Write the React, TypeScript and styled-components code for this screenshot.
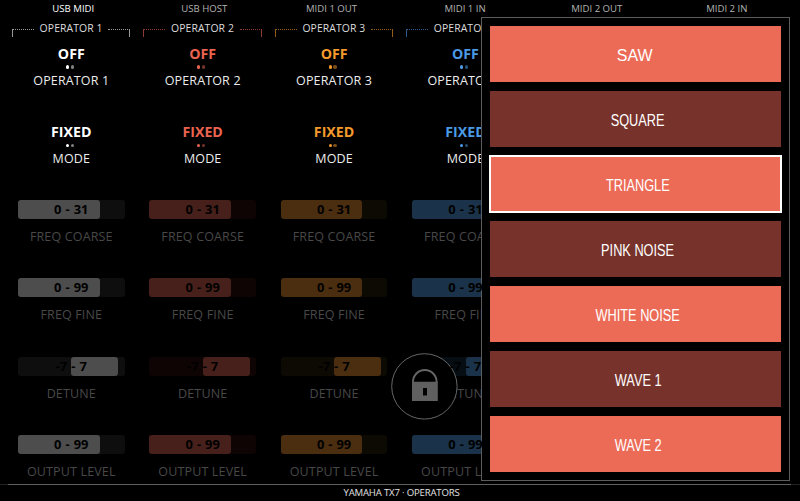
import React from "react";
import styled, { createGlobalStyle } from "styled-components";

const Global = createGlobalStyle`
  * { box-sizing: border-box; }
  body { margin: 0; background: #000; overflow: hidden; }
`;

const Screen = styled.main`
  position: relative;
  width: 800px;
  height: 501px;
  display: grid;
  grid-template-rows: 20px 464px 17px;
  background: #000;
  color: #ececec;
  font-family: "Open Sans", sans-serif;
  overflow: hidden;
`;

const Tabs = styled.nav`
  display: grid;
  grid-template-columns: 131px 131px 123.5px 143.5px 120px 140px;
  padding-left: 7.8px;
`;

const Tab = styled.div<{ $active?: boolean }>`
  text-align: center;
  font-size: 9.6px;
  line-height: 17px;
  color: ${(p) => (p.$active ? "#fff" : "#b2b2b2")};
`;

const Operators = styled.section`
  display: grid;
  grid-template-columns: repeat(4, 131.4px);
  padding-left: 5.6px;
`;

const Column = styled.div`
  display: grid;
  grid-template-rows: 17.2px repeat(6, 78.2px);
  min-width: 0;
`;

const Header = styled.header<{ $color: string }>`
  display: flex;
  align-items: flex-start;
  justify-content: space-between;
  width: 118.6px;
  margin-left: 6.2px;
  font-size: 10.4px;
  line-height: 17px;
  letter-spacing: 0.1px;
  white-space: nowrap;
  color: #dcdcdc;

  &::before,
  &::after {
    content: "";
    width: 21px;
    height: 7px;
    margin-top: 9px;
    border: 0 solid ${(p) => p.$color};
    border-top: 1px dotted ${(p) => p.$color};
    opacity: 0.6;
  }
  &::before { border-left-width: 1px; }
  &::after { border-right-width: 1px; }
`;

const Cell = styled.div`
  display: flex;
  flex-direction: column;
  align-items: center;
`;

const Value = styled.div<{ $color: string }>`
  margin-top: 6.7px;
  height: 20px;
  font: 700 14.2px/20px "Open Sans", sans-serif;
  color: ${(p) => p.$color};
`;

const Dots = styled.div<{ $color: string }>`
  display: flex;
  gap: 1.6px;
  width: 8px;
  height: 3px;
  margin: 1.5px 3px 0 0;

  &::before,
  &::after {
    content: "";
    width: 3.4px;
    height: 3.4px;
    border-radius: 50%;
    background: ${(p) => p.$color};
  }
  &::after { opacity: 0.5; }
`;

const Label = styled.div<{ $dim?: boolean }>`
  margin-top: ${(p) => (p.$dim ? "9.1px" : "3.3px")};
  font-size: 12.5px;
  line-height: 18px;
  letter-spacing: 0.15px;
  white-space: nowrap;
  color: ${(p) => (p.$dim ? "#484848" : "#ececec")};
`;

const Bar = styled.div<{ $fill: string; $track: string; $bipolar?: boolean }>`
  flex: none;
  width: 106.5px;
  height: 19px;
  margin-top: 6.6px;
  border-radius: 3px;
  background: ${(p) => p.$track};
  display: grid;

  &::before {
    content: "";
    grid-area: 1 / 1;
    width: ${(p) => (p.$bipolar ? "47px" : "81.5px")};
    margin-left: ${(p) => (p.$bipolar ? "53.3px" : "0")};
    border-radius: 3px;
    background: ${(p) => p.$fill};
  }
`;

const Range = styled.span`
  grid-area: 1 / 1;
  z-index: 1;
  text-align: center;
  font: 700 12.9px/19px "Open Sans", sans-serif;
  word-spacing: 0.7px;
  color: #000;
`;

const Footer = styled.footer`
  border-top: 1px solid #5a5a5a;
  border-image: linear-gradient(90deg, #222 9px, #606060 9px, #606060 790px, #222 790px) 1;
  padding-left: 3px;
  text-align: center;
  font-size: 9.6px;
  letter-spacing: -0.18px;
  line-height: 16px;
  color: #e2e2e2;
`;

const LockBadge = styled.svg`
  position: absolute;
  left: 391px;
  top: 353px;
  width: 67px;
  height: 67px;
`;

const Menu = styled.aside`
  position: absolute;
  left: 481px;
  top: 17px;
  width: 309px;
  height: 464px;
  padding: 8px;
  display: flex;
  flex-direction: column;
  gap: 9px;
  border: 1px solid #5c5c5c;
  background: #000;
`;

const Option = styled.button<{ $dark?: boolean; $selected?: boolean }>`
  flex: none;
  width: 290.5px;
  height: 56px;
  padding: 0;
  display: flex;
  align-items: center;
  justify-content: center;
  border: 0;
  outline: ${(p) => (p.$selected ? "2px solid #fff" : "none")};
  outline-offset: -1px;
  background: ${(p) => (p.$dark ? "#77332b" : "#ec6b57")};
  color: #fff;
  font: 16px/20px "Liberation Sans", Arial, sans-serif;
`;

const OptionText = styled.span<{ $wide?: boolean }>`
  transform: ${(p) => (p.$wide ? "translateX(-0.6px)" : "translateX(2.8px) scaleX(0.797)")};
  white-space: nowrap;
  padding-top: 3px;
`;

const tabs = ["USB MIDI", "USB HOST", "MIDI 1 OUT", "MIDI 1 IN", "MIDI 2 OUT", "MIDI 2 IN"];

const operators = [
  { color: "#ffffff", fill: "#4d4d4d", track: "#0e0e0e" },
  { color: "#ea6450", fill: "#47201b", track: "#0e0403" },
  { color: "#f49a2c", fill: "#4b2e10", track: "#0d0903" },
  { color: "#4b9ae6", fill: "#1b334a", track: "#060d13" },
];

const sliders = [
  { label: "FREQ COARSE", range: "0 - 31" },
  { label: "FREQ FINE", range: "0 - 99" },
  { label: "DETUNE", range: "-7 - 7", bipolar: true },
  { label: "OUTPUT LEVEL", range: "0 - 99" },
];

const waves = ["SAW", "SQUARE", "TRIANGLE", "PINK NOISE", "WHITE NOISE", "WAVE 1", "WAVE 2"];

function Operator({ index }: { index: number }) {
  const { color, fill, track } = operators[index];
  const name = `OPERATOR ${index + 1}`;
  return (
    <Column>
      <Header $color={color}>{name}</Header>
      {[["OFF", name], ["FIXED", "MODE"]].map(([value, label]) => (
        <Cell key={label}>
          <Value $color={color}>{value}</Value>
          <Dots $color={color} />
          <Label>{label}</Label>
        </Cell>
      ))}
      {sliders.map((s) => (
        <Cell key={s.label}>
          <Bar $fill={fill} $track={track} $bipolar={s.bipolar}>
            <Range>{s.range}</Range>
          </Bar>
          <Label $dim>{s.label}</Label>
        </Cell>
      ))}
    </Column>
  );
}

export default function App() {
  return (
    <>
      <Global />
      <Screen>
        <Tabs>
          {tabs.map((t, i) => (
            <Tab key={t} $active={i === 0}>{t}</Tab>
          ))}
        </Tabs>
        <Operators>
          {operators.map((o, i) => (
            <Operator key={o.color} index={i} />
          ))}
        </Operators>
        <Footer>YAMAHA TX7 · OPERATORS</Footer>
        <LockBadge viewBox="0 0 67 67">
          <circle cx="33.4" cy="33.4" r="32.7" fill="#000" stroke="#666" strokeWidth="1" />
          <path d="M22 30V28.8a11.8 11.8 0 0 1 23.6 0V30" fill="none" stroke="#666" strokeWidth="1.9" />
          <path d="M21 28.7H46.8V48H21ZM32 35V42.5H36V35Z" fill="#606060" fillRule="evenodd" />
        </LockBadge>
        <Menu>
          {waves.map((w, i) => (
            <Option key={w} $dark={i % 2 === 1} $selected={w === "TRIANGLE"}>
              <OptionText $wide={i === 0}>{w}</OptionText>
            </Option>
          ))}
        </Menu>
      </Screen>
    </>
  );
}
